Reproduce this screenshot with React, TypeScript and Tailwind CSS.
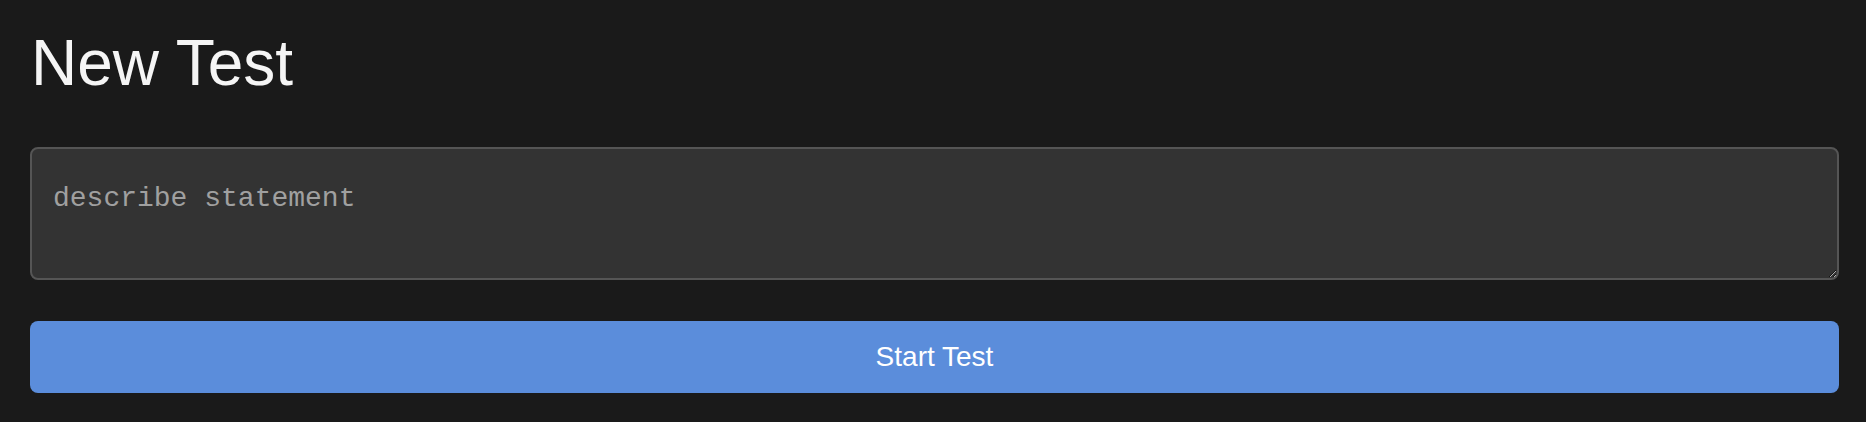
export default function App() {
  return (
    <div className="min-h-screen bg-[#1a1a1a] pl-[30px] pr-[27px] pt-[26px] pb-[29px] font-['Liberation_Sans',Arial,sans-serif]">
      {/* Heading */}
      <h1 className="ml-[1px] text-[64px] leading-[74px] font-normal text-[#f5f5f5]">New Test</h1>

      {/* Statement input */}
      <textarea
        placeholder="describe statement"
        className="mt-[47px] block h-[133px] w-full rounded-[8px] border-2 border-[#555555] bg-[#333333] pl-[21px] pr-[21px] pt-[34px] font-['Liberation_Mono','Courier_New',monospace] text-[28px] leading-[32px] text-[#dddddd] placeholder:text-[#a0a0a0] outline-none"
      />

      {/* Submit */}
      <button className="mt-[41px] flex h-[72px] w-full items-center justify-center rounded-[8px] bg-[#5b8ddb] text-[28px] text-white">
        Start Test
      </button>
    </div>
  );
}
